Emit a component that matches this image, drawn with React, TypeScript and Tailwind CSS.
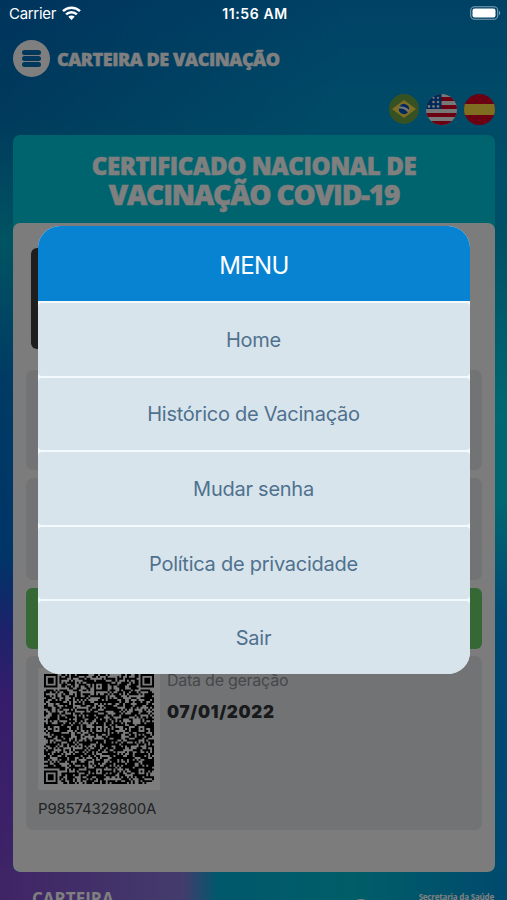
import { useMemo } from 'react';

const MENU_ITEMS = ['Home', 'Histórico de Vacinação', 'Mudar senha', 'Política de privacidade', 'Sair'];

// ─── QR code ──────────────────────────────────────────────────────────────────
// Version 10 grid: 57 modules, alignment patterns centred on 6 / 28 / 50.
const QR_SIZE = 57;
const QR_ALIGN = [[28, 6], [6, 28], [28, 28], [50, 28], [28, 50], [50, 50]];

const buildQrPath = () => {
  let seed = 98574329;
  const random = () => {
    seed = (seed * 1103515245 + 12345) % 2147483648;
    return seed / 2147483648;
  };

  const finders = [[3, 3], [QR_SIZE - 4, 3], [3, QR_SIZE - 4]];
  let d = '';

  for (let y = 0; y < QR_SIZE; y++) {
    for (let x = 0; x < QR_SIZE; x++) {
      let dark = random() < 0.58;
      for (const [cx, cy] of QR_ALIGN) {
        const r = Math.max(Math.abs(x - cx), Math.abs(y - cy));
        if (r <= 2) dark = r !== 1;
      }
      for (const [cx, cy] of finders) {
        const r = Math.max(Math.abs(x - cx), Math.abs(y - cy));
        if (r <= 4) dark = r !== 2 && r !== 4;
      }
      if (dark) d += `M${x} ${y}h1v1h-1z`;
    }
  }
  return d;
};

const QrCode = () => {
  const path = useMemo(buildQrPath, []);
  return (
    <svg viewBox="0 0 57 57" className="w-[110px] h-[110px]">
      <path d={path} fill="#000" />
    </svg>
  );
};
// ─────────────────────────────────────────────────────────────────────────────

const FlagBrazil = () => (
  <svg viewBox="0 0 30 30" className="w-[30px] h-[30px]">
    <circle cx="15" cy="15" r="15" fill="#6da544" />
    <path d="M15 6l12 9-12 9L3 15z" fill="#ffda44" />
    <circle cx="15" cy="15" r="5.2" fill="#f0f0f0" />
    <path d="M10.4 12.6a5.2 5.2 0 0 1 9.7 3.3c-2.4-2.6-5.8-3.9-9.7-3.3z" fill="#0052b4" />
    <path d="M9.8 14.6c3.5-.5 6.8.8 9.2 3.7a5.2 5.2 0 0 1-9.2-3.7z" fill="#0052b4" />
  </svg>
);

const FlagUsa = () => (
  <svg viewBox="0 0 31 31" className="w-[31px] h-[31px]">
    <clipPath id="usa">
      <circle cx="15.5" cy="15.5" r="15.5" />
    </clipPath>
    <g clipPath="url(#usa)">
      <path d="M0 0h31v31H0z" fill="#f0f0f0" />
      <path d="M15 3h16v4H15zM15 11h16v4H15zM0 19h31v4H0zM0 27h31v4H0z" fill="#d80027" />
      <path d="M0 0h15.5v15H0z" fill="#0052b4" />
      <g fill="#f0f0f0">
        <circle cx="7.5" cy="3.8" r="1.1" />
        <circle cx="12" cy="3.8" r="1.1" />
        <circle cx="7.5" cy="8" r="1.3" />
        <circle cx="12" cy="8" r="1.3" />
        <circle cx="3" cy="12.4" r="1.3" />
        <circle cx="7.5" cy="12.4" r="1.3" />
        <circle cx="12" cy="12.4" r="1.3" />
      </g>
    </g>
  </svg>
);

const FlagSpain = () => (
  <svg viewBox="0 0 31 31" className="w-[31px] h-[31px]">
    <clipPath id="spain">
      <circle cx="15.5" cy="15.5" r="15.5" />
    </clipPath>
    <g clipPath="url(#spain)">
      <path d="M0 0h31v31H0z" fill="#d80027" />
      <path d="M0 10h31v11H0z" fill="#ffda44" />
    </g>
  </svg>
);

const StatusBar = () => (
  <div className="absolute inset-x-0 top-0 h-7 px-[9px] flex items-center text-white text-[15px] font-['Inter',sans-serif]">
    <div className="flex-1 flex items-center gap-[6px]">
      <span className="tracking-[-0.3px]">Carrier</span>
      <svg viewBox="0 0 19 14" className="w-[19px] h-[14px] -mt-[2px]" fill="none" stroke="#fff" strokeWidth="2.5">
        <path d="M1 5.2a12.2 12.2 0 0 1 17 0" />
        <path d="M4.1 8.4a7.7 7.7 0 0 1 10.8 0" />
        <path d="M9.5 14L6.3 10.7a4.6 4.6 0 0 1 6.4 0z" fill="#fff" stroke="none" />
      </svg>
    </div>
    <span className="-mt-px font-semibold text-[14px] tracking-[0.6px]">11:56 AM</span>
    <div className="flex-1 flex justify-end -mr-[3px] -mt-[2px]">
      <svg viewBox="0 0 31 14" className="w-[31px] h-[14px]">
        <rect x="0.7" y="0.7" width="27" height="12.6" rx="3.8" fill="none" stroke="#fff" strokeOpacity="0.5" strokeWidth="1.1" />
        <rect x="2.5" y="2.5" width="23" height="9" rx="2" fill="#fff" />
        <path d="M29 4.8c1.6.7 1.6 3.7 0 4.4z" fill="#fff" fillOpacity="0.5" />
      </svg>
    </div>
  </div>
);

const MenuDialog = () => (
  <div className="absolute left-[38px] top-[226px] w-[432px] h-[448px] rounded-[22px] overflow-hidden bg-[#f3fafd] flex flex-col text-center font-['Inter',sans-serif]">
    <h2 className="h-[75px] shrink-0 flex items-center justify-center pt-1 bg-[#0883d2] text-white text-[24px] tracking-[-0.6px]">
      MENU
    </h2>
    <nav className="flex-1 grid grid-rows-5 gap-y-[2px] pt-[2px]">
      {MENU_ITEMS.map((item) => (
        <button
          key={item}
          className="flex items-center justify-center pt-px pr-px rounded-[4px] bg-[#d8e4eb] text-[#4f718f] text-[20px] tracking-[-0.25px]"
        >
          {item}
        </button>
      ))}
    </nav>
  </div>
);

const App = () => (
  <div className="relative h-[900px] w-[507px] overflow-hidden bg-linear-[180deg,#0084cc_0%,#0098d0_14%,#00a0cc_26%,#00d0e0_46%,#00cce0_56%,#0094e8_68%,#0090e8_85%,#0098e0_100%] font-['Open_Sans',sans-serif]">
    <div className="absolute inset-y-0 left-0 w-[340px] mask-r-from-0% mask-r-to-100% bg-linear-[180deg,#0068b8_0%,#0074b8_13%,#00a8c4_27%,#0074c8_42%,#0068d0_62%,#3a44d4_70%,#7038d8_78%,#8048cc_100%]" />

    <div className="relative isolate h-full flex flex-col">
      <header className="pt-10 pl-[13px] h-[94px] shrink-0 flex items-start gap-[7px]">
        <button className="w-[37px] h-[37px] rounded-full bg-white flex flex-col items-center justify-center gap-[1px]">
          <span className="w-[19px] h-[5px] rounded-full bg-[#0070b8]" />
          <span className="w-[19px] h-[5px] rounded-full bg-[#0070b8]" />
          <span className="w-[19px] h-[5px] rounded-full bg-[#0070b8]" />
        </button>
        <h1 className="pt-[6px] text-white text-[18px] leading-[26px] font-extrabold tracking-[-0.45px] whitespace-nowrap [-webkit-text-stroke:0.4px_white]">
          CARTEIRA DE VACINAÇÃO
        </h1>
      </header>

      <div className="h-[41px] shrink-0 pr-3 flex justify-end items-start gap-[7px]">
        <FlagBrazil />
        <FlagUsa />
        <FlagSpain />
      </div>

      <main className="ml-[13px] w-[482px] h-[737px] shrink-0 rounded-[7px] overflow-hidden bg-[#00c8dc] flex flex-col">
        <div className="h-[88px] pt-[16px] text-center text-white font-extrabold whitespace-nowrap [-webkit-text-stroke:0.5px_white]">
          <div className="text-[24px] leading-[29px] tracking-[-0.4px]">CERTIFICADO NACIONAL DE</div>
          <div className="text-[28px] leading-[29px] tracking-[-1.15px]">VACINAÇÃO COVID-19</div>
        </div>

        <div className="flex-1 rounded-[7px] bg-[#f8f8f8] px-[13px] pt-[25px] flex flex-col">
          <div className="ml-[5px] w-[84px] h-[101px] shrink-0 rounded-[6px] bg-[#3c3c3c]" />
          <div className="mt-[21px] h-[100px] shrink-0 rounded-[7px] bg-[#e4e6ea]" />
          <div className="mt-[8px] h-[102px] shrink-0 rounded-[7px] bg-[#e4e6ea]" />
          <div className="mt-[8px] h-[61px] shrink-0 rounded-[6px] bg-[#6cd06c]" />
          <div className="mt-[7px] h-[174px] shrink-0 rounded-[7px] bg-[#e4e6ea] pt-[12px] pl-[12px]">
            <div className="flex gap-[7px]">
              <div className="w-[122px] h-[122px] bg-[#fafafa] flex items-center justify-center">
                <QrCode />
              </div>
              <div className="font-['Inter',sans-serif]">
                <div className="text-[16px] leading-[24px] tracking-[-0.25px] text-[#8c9094]">Data de geração</div>
                <div className="mt-[8px] text-[17px] leading-[24px] font-black tracking-[0.7px] text-[#303438]">07/01/2022</div>
              </div>
            </div>
            <div className="mt-[7px] text-[15px] leading-[24px] tracking-[-0.2px] text-[#44484c] font-['Inter',sans-serif]">
              P98574329800A
            </div>
          </div>
        </div>
      </main>

      <footer className="relative -mt-1 -z-10 h-8 shrink-0 bg-linear-[90deg,#8048cc_0%,#8878d8_36%,#00b0d8_43%,#00bcd0_70%,#0094dc_100%] pl-8 pr-[13px] pt-[19px] flex justify-between overflow-hidden text-white">
        <span className="text-[17px] leading-[24px] font-bold">CARTEIRA</span>
        <span className="absolute left-[350px] top-[31px] w-[22px] h-[22px] rounded-full bg-white" />
        <span className="pt-[4px] text-[8px] leading-[12px] font-bold tracking-[-0.2px]">Secretaria da Saúde</span>
      </footer>
    </div>

    <div className="absolute inset-0 bg-black/50" />
    <StatusBar />
    <MenuDialog />
  </div>
);

export default App;
